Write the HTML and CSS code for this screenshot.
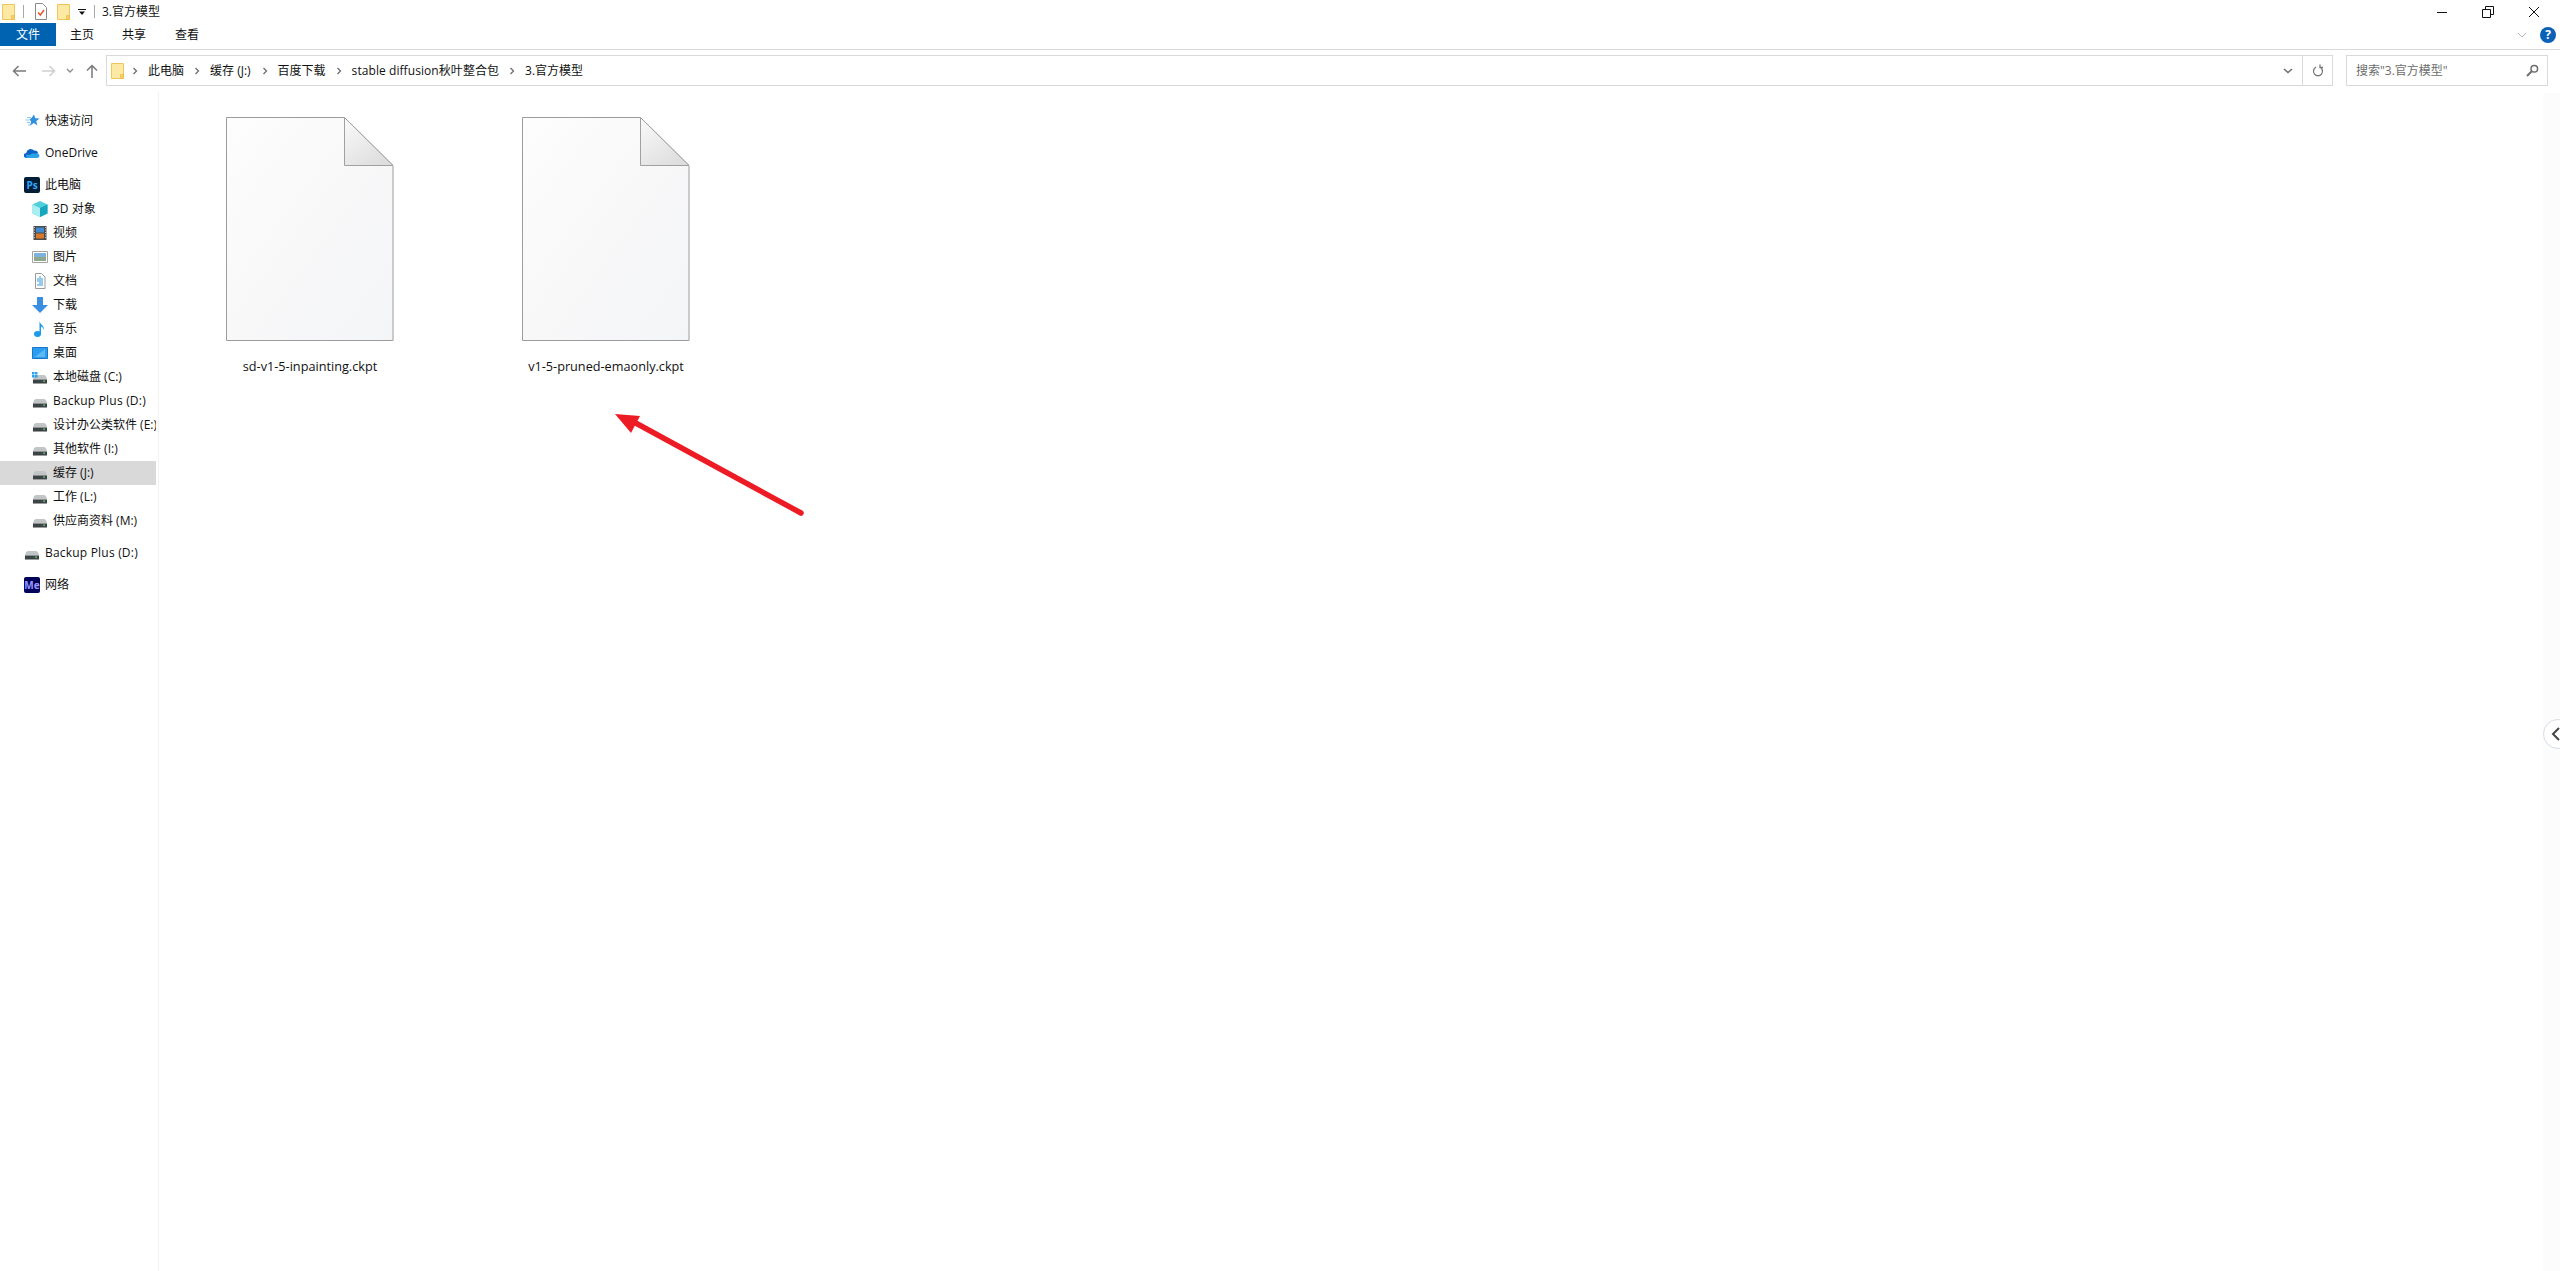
FILE: index.html
```html
<!DOCTYPE html>
<html lang="zh-CN">
<head>
    <meta charset="UTF-8">
    <title>3.官方模型</title>
    <link rel="stylesheet" href="styles.css">
</head>
<body>
    <svg class="defs" width="0" height="0">
        <defs>
            <linearGradient id="sheetFill" x1="0" y1="0" x2="1" y2="1">
                <stop offset="0" stop-color="#fdfdfd"/>
                <stop offset="0.5" stop-color="#f8f8f9"/>
                <stop offset="1" stop-color="#f4f5f7"/>
            </linearGradient>
            <linearGradient id="foldFill" x1="0" y1="0" x2="0.7" y2="1">
                <stop offset="0" stop-color="#fafafa"/>
                <stop offset="1" stop-color="#dedede"/>
            </linearGradient>
            <symbol id="folder" viewBox="0 0 13 16">
                <path d="M.5.5h12v15H.5z" fill="#fde9a4" stroke="#eec65c"/>
                <path d="M9.500 15.500v-4h3v4z" fill="#f5cf62" stroke="#e6b84a" stroke-width=".6"/>
            </symbol>
            <symbol id="chev" viewBox="0 0 6 8">
                <path d="M1.500 1l3 3-3 3" fill="none" stroke="#6d6d6d" stroke-width="1.300"/>
            </symbol>
            <symbol id="drive" viewBox="0 0 16 16">
                <path d="M1 10.500Q1.500 6 4.500 6h7q3 0 3.500 4.500z" fill="#c2c5c5"/>
                <path d="M1 10.500h14v3.500H1z" fill="#3c4346"/>
                <path d="M1 14h14v1H1z" fill="#9a9e9f"/>
                <path d="M11 11.500h2v1.300h-2z" fill="#58d05a"/>
            </symbol>
        </defs>
    </svg>

    <header class="titlebar">
        <svg class="qa-folder" width="13" height="16"><use href="#folder"/></svg>
        <span class="qa-sep"></span>
        <svg class="qa-check" width="12" height="17" viewBox="0 0 12 17">
            <path d="M.5.500h7l4 4v12H.5z" fill="#fff" stroke="#8a8a8a"/>
            <path d="M3 9.500l2.300 2.500L9 7" fill="none" stroke="#e8562a" stroke-width="1.500"/>
        </svg>
        <svg class="qa-folder2" width="13" height="16"><use href="#folder"/></svg>
        <svg class="qa-drop" width="8" height="8" viewBox="0 0 8 8">
            <path d="M0 1h8v1H0zM1 3.500h6L4 7z" fill="#111"/>
        </svg>
        <span class="qa-sep"></span>
        <span class="title">3.官方模型</span>
        <div class="win-btns">
            <svg width="12" height="12" viewBox="0 0 12 12"><path d="M1 6.500h10" stroke="#111"/></svg>
            <svg width="12" height="12" viewBox="0 0 12 12"><path d="M.5 3.500h8v8h-8zM3.500 3V.5h8v8H9" fill="none" stroke="#111"/></svg>
            <svg width="12" height="12" viewBox="0 0 12 12"><path d="M1 1l10 10M11 1L1 11" stroke="#111"/></svg>
        </div>
    </header>

    <nav class="tabs">
        <span class="tab tab-file">文件</span>
        <span class="tab tab-home">主页</span>
        <span class="tab tab-share">共享</span>
        <span class="tab tab-view">查看</span>
        <div class="tabs-right">
            <svg width="10" height="6" viewBox="0 0 10 6"><path d="M1 1l4 4 4-4" fill="none" stroke="#b5b5b5"/></svg>
            <span class="help">?</span>
        </div>
    </nav>

    <div class="toolbar">
        <div class="nav-btns">
            <svg width="14" height="12" viewBox="0 0 14 12"><path d="M6.500 1l-5 5 5 5M2 6h12" fill="none" stroke="#7a7a7a" stroke-width="1.500"/></svg>
            <svg class="off" width="14" height="12" viewBox="0 0 14 12"><path d="M7.500 1l5 5-5 5M12 6H0" fill="none" stroke="#cfcfcf" stroke-width="1.500"/></svg>
            <svg class="drop" width="8" height="6" viewBox="0 0 8 6"><path d="M1 1l3 3 3-3" fill="none" stroke="#8a8a8a" stroke-width="1.300"/></svg>
            <svg class="up" width="12" height="14" viewBox="0 0 12 14"><path d="M1 6.500l5-5 5 5M6 2v12" fill="none" stroke="#7a7a7a" stroke-width="1.500"/></svg>
        </div>
        <div class="address">
            <svg class="addr-folder" width="13" height="20"><use href="#folder"/></svg>
            <svg class="crumb-chev" width="6" height="8"><use href="#chev"/></svg>
            <span class="crumb">此电脑</span>
            <svg class="crumb-chev" width="6" height="8"><use href="#chev"/></svg>
            <span class="crumb crumb-cache">缓存 (J:)</span>
            <svg class="crumb-chev" width="6" height="8"><use href="#chev"/></svg>
            <span class="crumb">百度下载</span>
            <svg class="crumb-chev" width="6" height="8"><use href="#chev"/></svg>
            <span class="crumb crumb-sd">stable diffusion秋叶整合包</span>
            <svg class="crumb-chev" width="6" height="8"><use href="#chev"/></svg>
            <span class="crumb">3.官方模型</span>
            <svg class="addr-drop" width="10" height="6" viewBox="0 0 10 6"><path d="M1 1l4 3.500L9 1" fill="none" stroke="#6d6d6d" stroke-width="1.500"/></svg>
            <span class="refresh">
                <svg width="12" height="13" viewBox="0 0 12 13"><path d="M4 3.200a4.500 4.500 0 1 0 4 0M8 .5v3h3" fill="none" stroke="#7a7a7a" stroke-width="1.300"/></svg>
            </span>
        </div>
        <div class="search">
            <span>搜索"3.官方模型"</span>
            <svg width="13" height="13" viewBox="0 0 13 13"><circle cx="8.300" cy="4.700" r="3.300" fill="none" stroke="#6d6d6d" stroke-width="1.500"/><path d="M6 7l-5 5" stroke="#6d6d6d" stroke-width="2"/></svg>
        </div>
    </div>

    <div class="main">
        <aside class="sidebar">
            <div class="row top first">
                <svg class="ico" width="16" height="16" viewBox="0 0 16 16"><path d="M10 1.500l1.300 3.800 4.200.2-3.300 2.700 1.200 4.300-3.600-2.400-3.800 2.600 1.200-4.400-1.800-1.500L7.500 5z" fill="#2f8fe0"/><path d="M3 4.500h4M1.500 7H5M3 9.500h3M4 12h2" stroke="#93c9f3"/></svg>
                <span>快速访问</span>
            </div>
            <div class="row top gap">
                <svg class="ico" width="16" height="16" viewBox="0 0 16 16"><path d="M2.500 13a2.500 2.500 0 0 1-.3-5A4.500 4.500 0 0 1 10 5.500 3.200 3.200 0 0 1 14 8.500z" fill="#0a64c4"/><path d="M2.500 13h10.700a2.300 2.300 0 0 0 .6-4.500L8 8.500 5 10.300 2.200 9.300z" fill="#2ba3ea"/></svg>
                <span>OneDrive</span>
            </div>
            <div class="row top gap">
                <span class="ico badge ps">Ps</span>
                <span>此电脑</span>
            </div>
            <div class="row">
                <svg class="ico" width="16" height="16" viewBox="0 0 16 16"><path d="M8 0l7.500 3.500v9L8 16 .5 12.500v-9z" fill="#4fd0dc"/><path d="M.5 3.500L8 7v9L.5 12.500z" fill="#a9eef0"/><path d="M8 7l7.500-3.500v9L8 16z" fill="#17a6bd"/></svg>
                <span>3D 对象</span>
            </div>
            <div class="row">
                <svg class="ico" width="16" height="16" viewBox="0 0 16 16"><path d="M1.500 1h13v14h-13z" fill="#4b4b4b"/><path d="M4 2.500h8v5H4z" fill="#3f8ad0"/><path d="M4 8.500h8v5H4z" fill="#d7782a"/><path d="M2.300 2v12M13.700 2v12" stroke="#d8d8d8" stroke-dasharray="1 1.500"/></svg>
                <span>视频</span>
            </div>
            <div class="row">
                <svg class="ico" width="16" height="16" viewBox="0 0 16 16"><path d="M.5 2.500h15v11H.5z" fill="#fff" stroke="#a3a3a3"/><path d="M2 4h12v4H2z" fill="#7fb2dc"/><path d="M2 8h12v4H2z" fill="#8fa78c"/></svg>
                <span>图片</span>
            </div>
            <div class="row">
                <svg class="ico" width="16" height="16" viewBox="0 0 16 16"><path d="M3.500.5h6l3.500 3.500v11.500H3.500z" fill="#fff" stroke="#9a9a9a"/><path d="M5 6h6M5 8h6M7 10h4M5 12h6M7 4h2" stroke="#2f95dc"/></svg>
                <span>文档</span>
            </div>
            <div class="row">
                <svg class="ico" width="16" height="16" viewBox="0 0 16 16"><path d="M5 0h6v8h5l-8 8-8-8h5z" fill="#3b8fe3"/></svg>
                <span>下载</span>
            </div>
            <div class="row">
                <svg class="ico" width="16" height="16" viewBox="0 0 16 16"><ellipse cx="5.500" cy="13" rx="3.500" ry="3" fill="#1e9be8"/><path d="M7.500 13V0c.5 3.500 5 4.500 4.500 9-.7-2.500-2.500-3.500-3-3.500V13z" fill="#1e9be8"/></svg>
                <span>音乐</span>
            </div>
            <div class="row">
                <svg class="ico" width="16" height="16" viewBox="0 0 16 16"><path d="M.5 2.500h15v11H.5z" fill="#2a9df0" stroke="#1878c8"/><path d="M3 12L13 4v8z" fill="#5cb9f5"/></svg>
                <span>桌面</span>
            </div>
            <div class="row">
                <svg class="ico" width="16" height="16" viewBox="0 0 16 16"><use href="#drive"/><path d="M0 3h2.500v2.500H0zM3 3h2.500v2.500H3zM0 6h2.500v2.500H0zM3 6h2.500v2.500H3z" fill="#2ba3ea"/></svg>
                <span>本地磁盘 (C:)</span>
            </div>
            <div class="row">
                <svg class="ico" width="16" height="16"><use href="#drive"/></svg>
                <span class="latin">Backup Plus (D:)</span>
            </div>
            <div class="row">
                <svg class="ico" width="16" height="16"><use href="#drive"/></svg>
                <span>设计办公类软件 (E:)</span>
            </div>
            <div class="row">
                <svg class="ico" width="16" height="16"><use href="#drive"/></svg>
                <span>其他软件 (I:)</span>
            </div>
            <div class="row selected">
                <svg class="ico" width="16" height="16"><use href="#drive"/></svg>
                <span>缓存 (J:)</span>
            </div>
            <div class="row">
                <svg class="ico" width="16" height="16"><use href="#drive"/></svg>
                <span>工作 (L:)</span>
            </div>
            <div class="row">
                <svg class="ico" width="16" height="16"><use href="#drive"/></svg>
                <span>供应商资料 (M:)</span>
            </div>
            <div class="row top gap">
                <svg class="ico" width="16" height="16"><use href="#drive"/></svg>
                <span class="latin">Backup Plus (D:)</span>
            </div>
            <div class="row top gap">
                <span class="ico badge me">Me</span>
                <span>网络</span>
            </div>
        </aside>

        <section class="files">
            <div class="file">
                <svg class="doc" width="168" height="224" viewBox="0 0 168 224">
                    <path class="sheet" d="M.5.500h118l48.500 48v175H.5z"/>
                    <path class="fold" d="M118.500.5l48.500 48h-48.500z"/>
                </svg>
                <span class="name">sd-v1-5-inpainting.ckpt</span>
            </div>
            <div class="file">
                <svg class="doc" width="168" height="224" viewBox="0 0 168 224">
                    <path class="sheet" d="M.5.500h118l48.500 48v175H.5z"/>
                    <path class="fold" d="M118.500.5l48.500 48h-48.500z"/>
                </svg>
                <span class="name">v1-5-pruned-emaonly.ckpt</span>
            </div>
        </section>

        <svg class="arrow" width="200" height="110" viewBox="0 0 200 110">
            <path d="M187 100L18 8" stroke="#ed1c24" stroke-width="5.500" stroke-linecap="round"/>
            <path d="M1 1l25 2-9 17z" fill="#ed1c24"/>
        </svg>

        <div class="edge-strip"></div>
        <div class="edge-handle">
            <svg width="9" height="14" viewBox="0 0 9 14"><path d="M8 1L2 7l6 6" fill="none" stroke="#444" stroke-width="2"/></svg>
        </div>
    </div>
</body>
</html>
```

FILE: styles.css
```css
* {
    box-sizing: border-box;
}
html, body {
    height: 100%;
}
body {
    margin: 0;
    background: #fff;
    color: #111;
    font-family: "Open Sans", "Noto Sans CJK SC", sans-serif;
    font-size: 12px;
    line-height: 16px;
    overflow: hidden;
    display: flex;
    flex-direction: column;
}
svg {
    display: block;
    flex: none;
}
.defs {
    position: absolute;
}

.titlebar {
    height: 23px;
    display: flex;
    align-items: center;
    padding-left: 2px;
}
.qa-sep {
    width: 1px;
    height: 13px;
    background: #a8a8a8;
}
.qa-folder {
    margin-right: 8px;
}
.qa-check {
    margin-left: 11px;
}
.qa-folder2 {
    margin-left: 10px;
}
.qa-drop {
    margin-left: 8px;
    margin-right: 8px;
}
.title {
    margin-left: 7px;
}
.win-btns {
    margin-left: auto;
    display: flex;
    gap: 34px;
    padding-right: 20px;
}

.tabs {
    height: 27px;
    display: flex;
    align-items: flex-start;
    border-bottom: 1px solid #dadada;
}
.tab {
    height: 23px;
    line-height: 23px;
    text-align: center;
}
.tab-file {
    width: 56px;
    background: #0063b1;
    color: #fff;
}
.tab-home {
    margin-left: 14px;
}
.tab-share {
    margin-left: 28px;
}
.tab-view {
    margin-left: 29px;
}
.tabs-right {
    margin-left: auto;
    display: flex;
    align-items: center;
    gap: 13px;
    height: 23px;
    padding-right: 4px;
}
.help {
    width: 16px;
    height: 16px;
    border-radius: 50%;
    background: #0a62b8;
    color: #fff;
    font-weight: bold;
    line-height: 16px;
    text-align: center;
}

.toolbar {
    height: 42px;
    display: flex;
    padding-top: 5px;
    padding-left: 12px;
}
.nav-btns {
    width: 94px;
    height: 31px;
    display: flex;
    align-items: center;
}
.nav-btns .off {
    margin-left: 16px;
}
.nav-btns .drop {
    margin-left: 10px;
}
.nav-btns .up {
    margin-left: 12px;
}
.address {
    width: 2227px;
    height: 31px;
    border: 1px solid #d9d9d9;
    display: flex;
    align-items: center;
    padding-left: 4px;
}
.addr-folder {
    margin-right: 8px;
}
.crumb-chev {
    margin-right: 10px;
}
.crumb {
    margin-right: 10px;
}
.crumb-cache {
    margin-right: 11px;
}
.crumb-sd {
    letter-spacing: .07px;
}
.addr-drop {
    margin-left: auto;
    margin-right: 9px;
}
.refresh {
    width: 30px;
    height: 29px;
    border-left: 1px solid #d9d9d9;
    display: flex;
    align-items: center;
    justify-content: center;
}
.search {
    width: 202px;
    height: 31px;
    margin-left: 13px;
    border: 1px solid #d9d9d9;
    display: flex;
    align-items: center;
    justify-content: space-between;
    padding: 0 8px 0 9px;
    color: #6d6d6d;
}

.main {
    flex: 1;
    position: relative;
    display: flex;
    min-height: 0;
}
.sidebar {
    width: 159px;
    border-right: 1px solid #f2f2f2;
    padding-top: 17px;
}
.row {
    width: 156px;
    height: 24px;
    display: flex;
    align-items: center;
    padding-left: 32px;
    white-space: nowrap;
    overflow: hidden;
}
.row .ico {
    margin-right: 5px;
}
.row.top {
    padding-left: 24px;
}
.row.gap {
    margin-top: 8px;
}
.row.selected {
    background: #d9d9d9;
}
.latin {
    letter-spacing: .2px;
}
.badge {
    width: 16px;
    height: 16px;
    border-radius: 2px;
    font-size: 10px;
    line-height: 16px;
    font-weight: bold;
    text-align: center;
    flex: none;
}
.badge.ps {
    background: #001e36;
    color: #31a8ff;
}
.badge.me {
    background: #00005b;
    color: #9999ff;
}

.files {
    flex: 1;
    display: flex;
    padding-top: 25px;
    padding-left: 3px;
}
.file {
    width: 296px;
    display: flex;
    flex-direction: column;
    align-items: center;
}
.doc {
    margin-bottom: 16px;
}
.sheet {
    fill: url(#sheetFill);
    stroke: #9c9c9c;
}
.fold {
    fill: url(#foldFill);
    stroke: #a0a0a0;
}
.name {
    font-size: 12.7px;
    line-height: 18px;
}

.arrow {
    position: absolute;
    left: 614px;
    top: 321px;
}
.edge-strip {
    position: absolute;
    top: 1px;
    right: 0;
    bottom: 0;
    width: 17px;
    background: #fcfcfc;
}
.edge-handle {
    position: absolute;
    left: 2543px;
    top: 627px;
    width: 30px;
    height: 30px;
    border-radius: 50%;
    border: 1px solid #d5dce8;
    background: #fff;
    display: flex;
    align-items: center;
    padding-left: 7px;
}
```
